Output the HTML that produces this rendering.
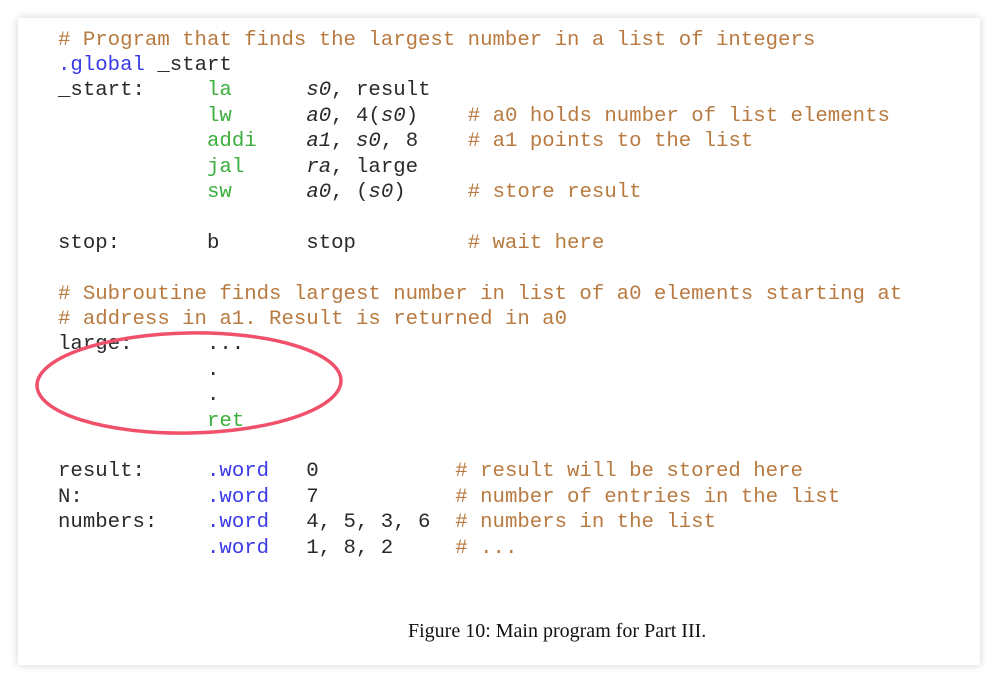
<!DOCTYPE html>
<html><head><style>
html,body{margin:0;padding:0;background:#fff;width:999px;height:685px;overflow:hidden}
.card{position:absolute;left:18px;top:18px;width:962px;height:647px;background:#fff;box-shadow:0 0 8px rgba(0,0,0,0.18)}
pre{position:absolute;left:58px;top:27.5px;margin:0;font-family:"Liberation Mono",monospace;font-size:20.7px;line-height:25.4px;color:#2a2a2a}
.c{color:#b87a40}.b{color:#3a3ae8}.g{color:#3caf3c}i{font-style:italic}
.cap{position:absolute;left:408px;top:620px;font-family:"Liberation Serif",serif;font-size:20px;color:#111;white-space:nowrap}
svg{position:absolute;left:0;top:0}
</style></head><body>
<div class="card"></div>
<pre><span class="c"># Program that finds the largest number in a list of integers</span>
<span class="b">.global</span> _start
_start:     <span class="g">la</span>      <i>s0</i>, result
            <span class="g">lw</span>      <i>a0</i>, 4(<i>s0</i>)    <span class="c"># a0 holds number of list elements</span>
            <span class="g">addi</span>    <i>a1</i>, <i>s0</i>, 8    <span class="c"># a1 points to the list</span>
            <span class="g">jal</span>     <i>ra</i>, large
            <span class="g">sw</span>      <i>a0</i>, (<i>s0</i>)     <span class="c"># store result</span>

stop:       b       stop         <span class="c"># wait here</span>

<span class="c"># Subroutine finds largest number in list of a0 elements starting at</span>
<span class="c"># address in a1. Result is returned in a0</span>
large:      ...
            .
            .
            <span class="g">ret</span>

result:     <span class="b">.word</span>   0           <span class="c"># result will be stored here</span>
N:          <span class="b">.word</span>   7           <span class="c"># number of entries in the list</span>
numbers:    <span class="b">.word</span>   4, 5, 3, 6  <span class="c"># numbers in the list</span>
            <span class="b">.word</span>   1, 8, 2     <span class="c"># ...</span></pre>
<svg width="999" height="685"><ellipse cx="189" cy="383" rx="152" ry="50" fill="none" stroke="#f0506a" stroke-width="3.5" transform="rotate(-1 189 383)"/></svg>
<div class="cap">Figure 10: Main program for Part III.</div>
</body></html>
